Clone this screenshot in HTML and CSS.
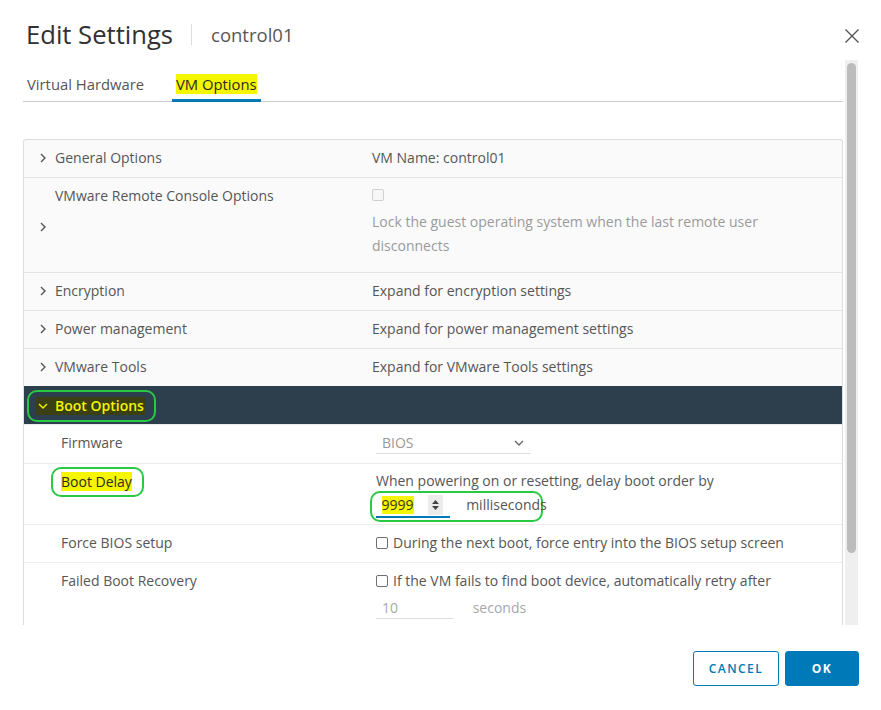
FILE: index.html
```html
<!DOCTYPE html>
<html lang="en">

<head>
    <meta charset="UTF-8">
    <meta name="viewport" content="width=device-width, initial-scale=1.0">
    <title>Edit Settings - control01</title>
    <link rel="stylesheet" href="styles.css">
</head>

<body>
    <div class="modal">
        <header class="modal-header">
            <h1 class="modal-title">Edit Settings</h1>
            <span class="title-sep"></span>
            <span class="modal-subtitle">control01</span>
            <button class="close-btn" aria-label="Close">
                <svg width="16" height="16" viewBox="0 0 16 16"><path d="M1.5 1.5 L14.5 14.5 M14.5 1.5 L1.5 14.5" stroke="#555" stroke-width="1.4" fill="none"/></svg>
            </button>
        </header>

        <div class="modal-body">
            <div class="scroll-content">
                <nav class="tabs">
                    <a class="tab">Virtual Hardware</a>
                    <a class="tab active"><mark>VM Options</mark></a>
                </nav>

                <div class="stack">
                    <div class="row">
                        <div class="row-label">
                            <svg class="chev" width="10" height="10" viewBox="0 0 10 10"><polyline points="3,1 7,5 3,9"/></svg>
                            <span>General Options</span>
                        </div>
                        <div class="row-value">VM Name: control01</div>
                    </div>

                    <div class="row">
                        <div class="row-label tall">
                            <svg class="chev" width="10" height="10" viewBox="0 0 10 10"><polyline points="3,1 7,5 3,9"/></svg>
                            <span>VMware Remote Console Options</span>
                        </div>
                        <div class="row-value">
                            <div class="check-line"><span class="checkbox disabled"></span></div>
                            <p class="muted-text">Lock the guest operating system when the last remote user disconnects</p>
                        </div>
                    </div>

                    <div class="row">
                        <div class="row-label">
                            <svg class="chev" width="10" height="10" viewBox="0 0 10 10"><polyline points="3,1 7,5 3,9"/></svg>
                            <span>Encryption</span>
                        </div>
                        <div class="row-value">Expand for encryption settings</div>
                    </div>

                    <div class="row">
                        <div class="row-label">
                            <svg class="chev" width="10" height="10" viewBox="0 0 10 10"><polyline points="3,1 7,5 3,9"/></svg>
                            <span>Power management</span>
                        </div>
                        <div class="row-value">Expand for power management settings</div>
                    </div>

                    <div class="row">
                        <div class="row-label">
                            <svg class="chev" width="10" height="10" viewBox="0 0 10 10"><polyline points="3,1 7,5 3,9"/></svg>
                            <span>VMware Tools</span>
                        </div>
                        <div class="row-value">Expand for VMware Tools settings</div>
                    </div>

                    <div class="row row-open">
                        <span class="ring ring-header">
                            <mark class="mark-dark">
                                <svg class="chev chev-down" width="10" height="10" viewBox="0 0 10 10"><polyline points="1,3 5,7 9,3"/></svg>
                                Boot Options
                            </mark>
                        </span>
                    </div>

                    <div class="child">
                        <div class="child-label">Firmware</div>
                        <div class="child-value">
                            <span class="select">BIOS
                                <svg width="10" height="10" viewBox="0 0 10 10"><polyline points="1,3 5,7 9,3"/></svg>
                            </span>
                        </div>
                    </div>

                    <div class="child child-delay">
                        <div class="child-label ringed">
                            <span class="ring ring-label"><mark>Boot Delay</mark></span>
                        </div>
                        <div class="child-value">
                            <div>When powering on or resetting, delay boot order by</div>
                            <div class="ring ring-input">
                                <span class="num-input"><mark>9999</mark>
                                    <span class="spinner">
                                        <svg width="9" height="14" viewBox="0 0 9 14"><path d="M4.5 2 L8 6 L1 6 Z M1 8 L8 8 L4.5 12 Z" fill="#444"/></svg>
                                    </span>
                                </span>
                                <span class="unit">milliseconds</span>
                            </div>
                        </div>
                    </div>

                    <div class="child">
                        <div class="child-label">Force BIOS setup</div>
                        <div class="child-value">
                            <label class="check"><span class="checkbox"></span>During the next boot, force entry into the BIOS setup screen</label>
                        </div>
                    </div>

                    <div class="child">
                        <div class="child-label">Failed Boot Recovery</div>
                        <div class="child-value">
                            <label class="check"><span class="checkbox"></span>If the VM fails to find boot device, automatically retry after</label>
                            <div class="retry-line">
                                <span class="text-input">10</span>
                                <span class="unit muted">seconds</span>
                            </div>
                        </div>
                    </div>
                </div>
            </div>

            <div class="scrollbar"><div class="scroll-thumb"></div></div>
        </div>

        <footer class="modal-footer">
            <button class="btn btn-outline">Cancel</button>
            <button class="btn btn-primary">OK</button>
        </footer>
    </div>
</body>

</html>
```

FILE: styles.css
```css
body {
    margin: 0;
    background-color: #fff;
    font-family: 'Open Sans', 'Liberation Sans', sans-serif;
    font-size: 14px;
    color: #565656;
}

.modal {
    width: 881px;
    height: 710px;
    display: flex;
    flex-direction: column;
    overflow: hidden;
}

/* header */
.modal-header {
    height: 60px;
    box-sizing: border-box;
    padding: 9px 21px 0 26px;
    display: flex;
    align-items: center;
}

.modal-title {
    margin: 0;
    font-size: 25.6px;
    font-weight: 400;
    line-height: 30px;
    color: #313131;
}

.title-sep {
    width: 1px;
    height: 21px;
    background-color: #ddd;
    margin: 0 19px 0 18px;
}

.modal-subtitle {
    font-size: 18.5px;
    line-height: 24px;
    color: #575757;
}

.close-btn {
    margin-left: auto;
    border: none;
    background: none;
    padding: 0;
    width: 16px;
    height: 16px;
    margin-top: 2px;
    cursor: pointer;
}

.close-btn svg {
    display: block;
}

/* body + fake scrollbar */
.modal-body {
    height: 565px;
    display: flex;
}

.scroll-content {
    flex: 1;
    overflow: hidden;
    padding: 0 2px 0 23px;
}

.scrollbar {
    width: 13px;
    margin-right: 23px;
    background-color: #efefef;
    padding-top: 3px;
    box-sizing: border-box;
}

.scroll-thumb {
    width: 9px;
    height: 490px;
    margin-left: 2px;
    border-radius: 5px;
    background-color: #bcbcbc;
}

/* tabs */
.tabs {
    margin-top: 10px;
    display: flex;
    gap: 24px;
    border-bottom: 1px solid #ccc;
}

.tab {
    padding: 0 4px;
    line-height: 29px;
    border-bottom: 3px solid transparent;
    margin-bottom: -1px;
    color: #565656;
    font-size: 14.8px;
}

.tab.active {
    border-bottom-color: #0079b8;
    color: #333;
}

mark {
    background-color: #f6f600;
    color: #2a2a2a;
}

/* stack view */
.stack {
    margin-top: 37px;
    border: 1px solid #ddd;
    border-bottom: none;
    border-radius: 3px 3px 0 0;
    background-color: #fafafa;
}

.row {
    display: grid;
    grid-template-columns: 348px 1fr;
    border-top: 1px solid #e4e4e4;
    line-height: 20px;
}

.row:first-child {
    border-top: none;
}

.row-label {
    display: flex;
    align-items: center;
    padding: 8px 0 9px 14px;
}

.row-label.tall {
    display: grid;
    grid-template-columns: 17px 1fr;
    grid-template-rows: 1fr;
    padding-top: 8px;
    padding-bottom: 12px;
}

.row-label.tall .chev {
    grid-row: 1;
    grid-column: 1;
    align-self: center;
    margin-top: 8px;
}

.row-label.tall span {
    grid-row: 1;
    grid-column: 2;
    align-self: start;
}

.chev {
    flex: none;
    margin-right: 7px;
    fill: none;
    stroke: #565656;
    stroke-width: 1.4;
}

.row-value {
    padding: 8px 10px 9px 0;
    color: #565656;
}

.check-line {
    height: 20px;
    display: flex;
    align-items: center;
}

.muted-text {
    margin: 4px 0 5px;
    line-height: 24px;
    color: #9b9b9b;
    max-width: 400px;
}

.checkbox {
    display: inline-block;
    width: 10px;
    height: 10px;
    border: 1px solid #707070;
    border-radius: 2px;
    background-color: #fff;
    margin-right: 5px;
    vertical-align: -1px;
}

.checkbox.disabled {
    border-color: #d0d0d0;
    background-color: #f7f7f7;
    margin-top: -3px;
}

/* expanded header */
.row-open {
    display: block;
    background-color: #2d3e4c;
    border-top-color: #2d3e4c;
    padding: 3px 0 2px 3px;
}

.ring {
    display: inline-block;
    border: 2.5px solid #29c845;
    border-radius: 10px;
    box-sizing: border-box;
}

.ring-header {
    padding: 4px 9px 4px 7px;
}

.mark-dark {
    display: inline-flex;
    align-items: center;
    background-color: #3a3f14;
    color: #f4f400;
    padding: 0 1px 0 2px;
    line-height: 18px;
    font-weight: 600;
}

.chev-down {
    stroke: #f4f400;
}

/* child rows */
.child {
    display: grid;
    grid-template-columns: 352px 1fr;
    border-top: 1px solid #ececec;
    background-color: #fff;
    line-height: 20px;
}

.child-label {
    padding: 8px 0 9px 37px;
}

.child-label.ringed {
    padding: 3px 0 0 27px;
}

.ring-label {
    padding: 3px 10px 3px 8px;
}

.child-value {
    padding: 8px 10px 9px 0;
}

.child-delay .child-value {
    padding: 7px 10px 2px 0;
}

.select {
    display: inline-flex;
    align-items: center;
    justify-content: space-between;
    width: 155px;
    box-sizing: border-box;
    padding: 0 7px 0 6px;
    border-bottom: 1px solid #ddd;
    color: #9a9a9a;
}

.select svg {
    fill: none;
    stroke: #666;
    stroke-width: 1.3;
}

.ring-input {
    width: 173px;
    height: 31px;
    margin-left: -6px;
    padding: 1px 0 0 3.5px;
    white-space: nowrap;
}

.num-input {
    display: inline-flex;
    align-items: center;
    justify-content: space-between;
    width: 74px;
    box-sizing: border-box;
    height: 24px;
    padding-left: 6px;
    padding-right: 7px;
    border-bottom: 2px solid #0079b8;
    vertical-align: top;
}

.num-input mark {
    line-height: 18px;
    color: #333;
}

.spinner {
    width: 15px;
    height: 20px;
    background-color: #ececec;
    display: flex;
    align-items: center;
    justify-content: center;
}

.unit {
    margin-left: 16px;
    line-height: 22px;
    color: #565656;
}

.ring-input .unit {
    margin-left: 13px;
}

.check {
    display: block;
}

.retry-line {
    margin-top: 6px;
}

.text-input {
    display: inline-block;
    width: 77px;
    box-sizing: border-box;
    padding-left: 6px;
    border-bottom: 1px solid #ddd;
    color: #a8a8a8;
}

.unit.muted {
    color: #a8a8a8;
}

/* footer */
.modal-footer {
    flex: 1;
    display: flex;
    justify-content: flex-end;
    align-items: flex-start;
    gap: 6px;
    padding: 26px 22px 0 0;
}

.btn {
    height: 35px;
    border-radius: 3px;
    font-family: 'Open Sans', 'Liberation Sans', sans-serif;
    font-size: 12px;
    font-weight: 600;
    letter-spacing: 0.12em;
    text-transform: uppercase;
    cursor: pointer;
}

.btn-outline {
    width: 86px;
    border: 1px solid #0079b8;
    background-color: #fff;
    color: #0079b8;
}

.btn-primary {
    width: 74px;
    border: 1px solid #0079b8;
    background-color: #0079b8;
    color: #fff;
    font-weight: 700;
}
```
